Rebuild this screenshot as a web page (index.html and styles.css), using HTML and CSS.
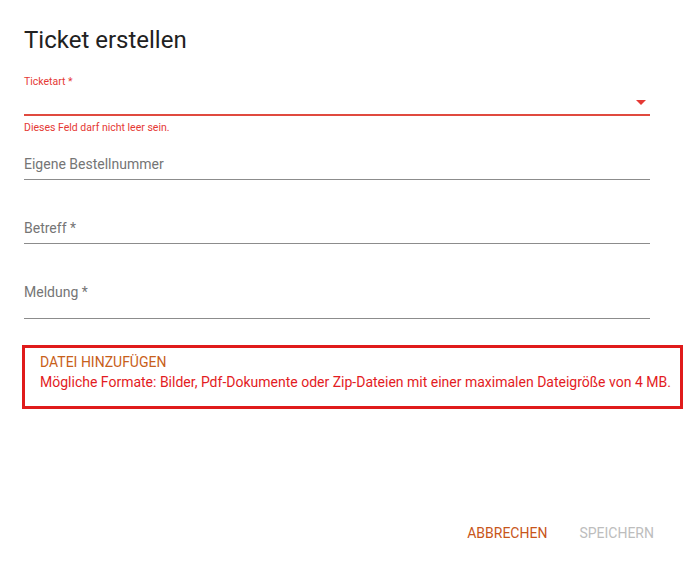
FILE: index.html
```html
<!DOCTYPE html>
<html lang="de">
<head>
<meta charset="utf-8">
<title>Ticket erstellen</title>
<link rel="stylesheet" href="styles.css">
</head>
<body>
<div class="dialog">
  <h1 class="title">Ticket erstellen</h1>
  <div class="form">
    <div class="field select-field">
      <label class="float-label">Ticketart *</label>
      <div class="select-input"><span class="arrow"></span></div>
      <div class="error-text">Dieses Feld darf nicht leer sein.</div>
    </div>
    <div class="field text-field first">
      <div class="placeholder">Eigene Bestellnummer</div>
    </div>
    <div class="field text-field">
      <div class="placeholder">Betreff *</div>
    </div>
    <div class="field text-field textarea">
      <div class="placeholder">Meldung *</div>
    </div>
  </div>
  <div class="upload-box">
    <div class="upload-btn">DATEI HINZUFÜGEN</div>
    <div class="upload-hint">Mögliche Formate: Bilder, Pdf-Dokumente oder Zip-Dateien mit einer maximalen Dateigröße von 4 MB.</div>
  </div>
  <div class="actions">
    <span class="btn btn-cancel">ABBRECHEN</span>
    <span class="btn btn-save">SPEICHERN</span>
  </div>
</div>
</body>
</html>
```

FILE: styles.css
```css
* { box-sizing: border-box; }
html, body { margin: 0; padding: 0; background: #ffffff; }
body { font-family: Roboto, "Liberation Sans", Arial, sans-serif; width: 692px; height: 565px; overflow: hidden; }

.dialog { padding: 26px 0 0 24px; }

.title {
  margin: 0;
  font-size: 24px;
  line-height: 28px;
  font-weight: 400;
  color: #212121;
}

.form { width: 626px; }

.select-field { margin-top: 21px; }
.float-label {
  display: block;
  font-size: 10.5px;
  line-height: 13px;
  color: #e53935;
}
.select-input {
  height: 28px;
  border-bottom: 2px solid #e04a3f;
  display: flex;
  justify-content: flex-end;
  align-items: flex-start;
  padding: 12px 4px 0 0;
}
.arrow {
  width: 0;
  height: 0;
  border-left: 5px solid transparent;
  border-right: 5px solid transparent;
  border-top: 5px solid #e53935;
}
.error-text {
  margin-top: 6px;
  font-size: 10.5px;
  line-height: 12px;
  color: #e53935;
}

.text-field {
  margin-top: 40px;
  border-bottom: 1px solid #8c8c8c;
  padding-bottom: 7px;
}
.text-field.first { margin-top: 22px; }
.text-field.textarea { padding-bottom: 18px; }
.placeholder {
  font-size: 14px;
  line-height: 16px;
  color: #757575;
}

.upload-box {
  margin: 26px 0 0 -2px;
  width: 661px;
  height: 64px;
  border: 3px solid #e01b1b;
  padding: 6px 0 0 15px;
}
.upload-btn {
  font-size: 14px;
  line-height: 16px;
  color: #c8601a;
}
.upload-hint {
  margin-top: 4px;
  font-size: 14px;
  line-height: 16px;
  color: #e31b23;
}

.actions {
  margin-top: 116px;
  display: flex;
  justify-content: flex-end;
  gap: 32px;
  padding-right: 38px;
}
.btn {
  font-size: 14px;
  line-height: 16px;
}
.btn-cancel { color: #c8561a; }
.btn-save { color: #bdbdbd; }
```
